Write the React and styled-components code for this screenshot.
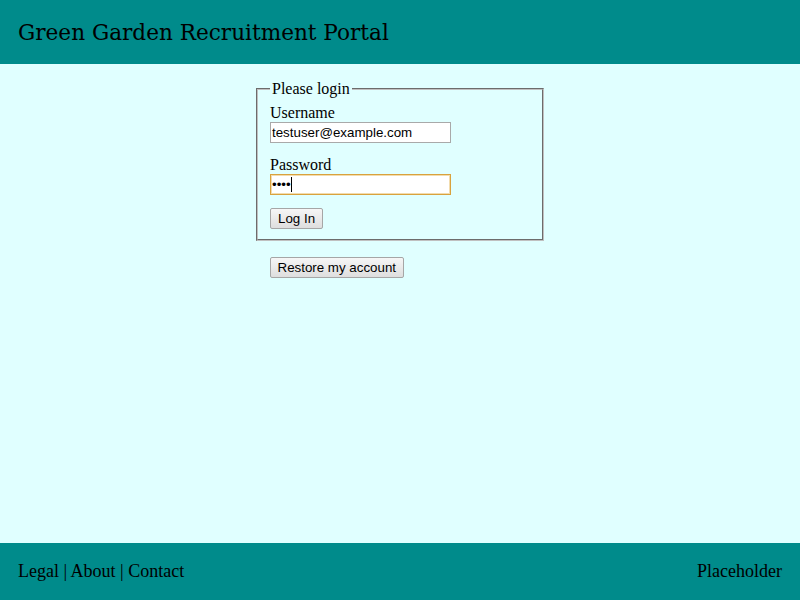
import React from "react";
import styled, { createGlobalStyle } from "styled-components";

const Global = createGlobalStyle`
  html, body { margin: 0; padding: 0; height: 100%; }
  body {
    background: #e0ffff;
    font-family: "Liberation Serif", "Times New Roman", serif;
    font-size: 16px;
    color: #000;
  }
`;

const Page = styled.div`
  display: flex;
  flex-direction: column;
  min-height: 100vh;
`;

const Header = styled.header`
  height: 64px;
  background: #008b8b;
  display: flex;
  align-items: center;
  padding: 0 18px;
  box-sizing: border-box;
`;

const Title = styled.h1`
  margin: 0;
  font-family: "DejaVu Serif", serif;
  font-weight: normal;
  font-size: 21.6px;
  color: #000;
`;

const Main = styled.main`
  flex: 1;
  display: flex;
  flex-direction: column;
  align-items: center;
  padding-top: 16px;
`;

const Column = styled.div`
  width: 288px;
  display: flex;
  flex-direction: column;
  align-items: flex-start;
`;

const Fieldset = styled.fieldset`
  margin: 0;
  width: 100%;
  box-sizing: border-box;
  border: 2px groove #c0c0c0;
  padding: 6px 12px 10px;
`;

const Legend = styled.legend`
  padding: 0 2px;
  font-size: 16px;
`;

const Field = styled.div`
  display: flex;
  flex-direction: column;
  align-items: flex-start;
  margin-bottom: 13px;
`;

const Label = styled.label`
  line-height: 18px;
`;

const InputWrap = styled.div`
  position: relative;
`;

const Input = styled.input`
  display: block;
  width: 181px;
  height: 21px;
  box-sizing: border-box;
  font-family: "Liberation Sans", Arial, sans-serif;
  font-size: 13.33px;
  padding: 1px 1px;
  border: 1px solid ${(p) => (p.$focused ? "#d9a23e" : "#a9a9a9")};
  box-shadow: ${(p) => (p.$focused ? "inset 0 0 0 1px #f2dcae" : "none")};
  background: #fff;
  outline: none;
  caret-color: #000;
`;

const Caret = styled.span`
  position: absolute;
  left: 21px;
  top: 3px;
  width: 1px;
  height: 15px;
  background: #000;
`;

const Button = styled.button`
  font-family: "Liberation Sans", Arial, sans-serif;
  font-size: 13.33px;
  height: 21px;
  padding: 0 ${(p) => p.$pad || "7px"};
  border: 1px solid #a6a6a6;
  border-radius: 2px;
  background: linear-gradient(#f6f6f6, #dedede);
  color: #000;
  margin-left: ${(p) => p.$indent || 0};
  margin-top: ${(p) => p.$top || 0};
`;

const Footer = styled.footer`
  height: 57px;
  background: #008b8b;
  display: flex;
  align-items: center;
  justify-content: space-between;
  padding: 0 18px;
  box-sizing: border-box;
  font-size: 18px;
`;

export default function App() {
  return (
    <Page>
      <Global />
      <Header>
        <Title>Green Garden Recruitment Portal</Title>
      </Header>
      <Main>
        <Column>
          <Fieldset>
            <Legend>Please login</Legend>
            <Field>
              <Label htmlFor="u">Username</Label>
              <Input id="u" type="text" defaultValue="testuser@example.com" />
            </Field>
            <Field>
              <Label htmlFor="p">Password</Label>
              <InputWrap>
                <Input id="p" type="password" defaultValue="abcd" $focused />
                <Caret />
              </InputWrap>
            </Field>
            <Button>Log In</Button>
          </Fieldset>
          <Button $indent="14px" $top="16px" $pad="6.5px">Restore my account</Button>
        </Column>
      </Main>
      <Footer>
        <span>Legal | About | Contact</span>
        <span>Placeholder</span>
      </Footer>
    </Page>
  );
}
